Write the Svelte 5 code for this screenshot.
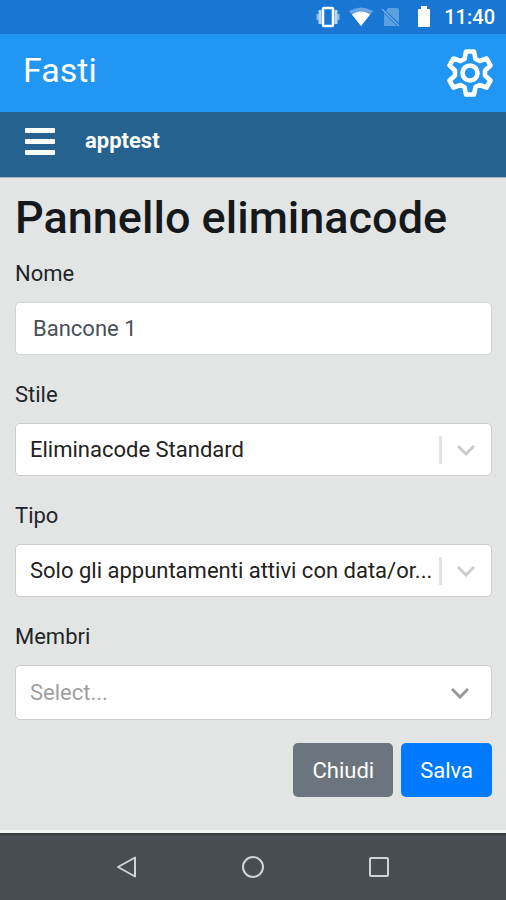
<script>
  let name = $state("Bancone 1");
  let style = $state("standard");
  let type = $state("active");
  let member = $state("");
</script>

<svelte:head>
  <title>Fasti</title>
</svelte:head>

<div class="screen">
  <div class="status">
    <svg width="26" height="22" viewBox="0 0 26 22" fill="none" stroke="#fff">
      <rect x="8" y="2" width="10" height="18" rx="1" stroke-width="2.5" />
      <path d="M5 4v14M21 4v14" stroke-width="3" opacity=".7" />
      <path d="M2.5 8v6M23.5 8v6" stroke-width="2" opacity=".5" />
    </svg>
    <svg width="24" height="20" viewBox="0 0 24 20" fill="#fff">
      <path d="M0 4Q12-3 24 4L12 19z" opacity=".35" />
      <path d="M3 7.5Q12 1.5 21 7.5L12 19z" />
    </svg>
    <svg class="sim" width="20" height="20" viewBox="0 0 20 20">
      <path d="M7 1h9q2 0 2 2v13L5 4zM3 6l13 13H3z" fill="#fff" opacity=".3" />
      <path d="M1 2l17 17" stroke="#fff" stroke-width="1.5" opacity=".4" />
    </svg>
    <svg class="battery" width="14" height="22" viewBox="0 0 14 22" fill="#fff">
      <path d="M4 0h6v3h2q1 0 1 1v16q0 1-1 1H2q-1 0-1-1V4q0-1 1-1h2z" />
    </svg>
    <span>11:40</span>
  </div>

  <header class="appbar">
    <span class="brand">Fasti</span>
    <button class="icon" aria-label="Impostazioni">
      <svg width="48" height="50" viewBox="-24 -25 48 50" fill="none" stroke="#fff" stroke-width="4.6" stroke-linejoin="round">
        <path d="M-4-21.500H4L5.500-14L9.500-12L16.500-14.500L20.500-7.500L15-2.500V2.500L20.500 7.500L16.500 14.500L9.500 12L5.500 14L4 21.500H-4L-5.500 14L-9.500 12L-16.500 14.500L-20.500 7.500L-15 2.500V-2.500L-20.500-7.500L-16.500-14.500L-9.500-12L-5.500-14Z" />
        <circle r="7.500" />
      </svg>
    </button>
  </header>

  <nav class="menubar">
    <button class="icon" aria-label="Menu">
      <svg width="30" height="28" viewBox="0 0 30 28" fill="#fff">
        <rect width="30" height="5" rx="1" y="1" />
        <rect width="30" height="5" rx="1" y="12" />
        <rect width="30" height="5" rx="1" y="23" />
      </svg>
    </button>
    <strong>apptest</strong>
  </nav>

  <main>
    <h1>Pannello eliminacode</h1>
    <form onsubmit={(e) => e.preventDefault()}>
      <div class="group">
        <label for="name">Nome</label>
        <input id="name" type="text" bind:value={name} />
      </div>

      <div class="group">
        <label for="style">Stile</label>
        <div class="select">
          <select id="style" bind:value={style}>
            <option value="standard">Eliminacode Standard</option>
          </select>
          {@render chevron(true)}
        </div>
      </div>

      <div class="group">
        <label for="type">Tipo</label>
        <div class="select">
          <select id="type" bind:value={type}>
            <option value="active">Solo gli appuntamenti attivi con data/or...</option>
          </select>
          {@render chevron(true)}
        </div>
      </div>

      <div class="group">
        <label for="members">Membri</label>
        <div class="select members">
          <select id="members" class:empty={!member} bind:value={member}>
            <option value="">Select...</option>
          </select>
          {@render chevron(false)}
        </div>
      </div>

      <div class="actions">
        <button type="button" class="btn secondary">Chiudi</button>
        <button type="submit" class="btn primary">Salva</button>
      </div>
    </form>
  </main>

  <footer>
    <button class="icon" aria-label="Indietro">
      <svg width="24" height="24" viewBox="0 0 24 24"><path d="M20 2.500v19L3 12z" /></svg>
    </button>
    <button class="icon" aria-label="Home">
      <svg width="24" height="24" viewBox="0 0 24 24"><circle cx="12" cy="12" r="10" /></svg>
    </button>
    <button class="icon" aria-label="Recenti">
      <svg width="24" height="24" viewBox="0 0 24 24"><rect x="3" y="3" width="18" height="18" rx="1" /></svg>
    </button>
  </footer>
</div>

{#snippet chevron(separator)}
  <span class="indicator" class:separator>
    <svg width="18" height="12" viewBox="0 0 18 12" fill="none" stroke="currentColor" stroke-width="3">
      <path d="M1 2l8 8 8-8" />
    </svg>
  </span>
{/snippet}

<style>
  :global(body) {
    margin: 0;
    background: #e3e5e4;
  }

  .screen {
    display: flex;
    flex-direction: column;
    min-height: 100vh;
    font-family: Roboto, sans-serif;
    font-size: 22px;
    line-height: 33px;
    color: #212529;
  }

  svg {
    display: block;
  }

  button,
  input,
  select {
    box-sizing: border-box;
    font: inherit;
  }

  .icon {
    padding: 0;
    border: 0;
    background: none;
    cursor: pointer;
  }

  .status {
    display: flex;
    align-items: center;
    justify-content: flex-end;
    gap: 8px;
    height: 34px;
    padding: 0 11px;
    background: #1976d2;
    color: #fff;
    font-size: 20px;
    font-weight: 500;
  }

  .sim {
    margin-right: 8px;
  }

  .battery {
    margin-right: 5px;
  }

  .appbar {
    display: flex;
    align-items: center;
    justify-content: space-between;
    height: 78px;
    padding: 0 12px 0 23px;
    background: #2196f3;
    color: #fff;
  }

  .brand {
    padding-bottom: 6px;
    font-size: 34px;
  }

  .menubar {
    display: flex;
    align-items: center;
    gap: 30px;
    height: 66px;
    padding: 0 25px 8px;
    box-sizing: border-box;
    border-bottom: 1px solid #a5b5c0;
    background: #25628f;
    color: #fff;
  }

  main {
    flex: 1;
    padding: 13px 14px 12px 15px;
    border-bottom: 3px solid #f2f7f6;
  }

  h1 {
    margin: 0 0 13px;
    color: #15191c;
    font-size: 45px;
    font-weight: 500;
    line-height: 53px;
  }

  .group {
    margin-bottom: 23px;
  }

  label {
    display: block;
    margin-bottom: 12px;
  }

  input,
  .select {
    width: 100%;
    height: 53px;
    border: 1px solid #ced4da;
    border-radius: 5px;
    background: #fff;
  }

  input {
    padding: 0 17px;
    color: #495057;
  }

  .select {
    display: flex;
    align-items: center;
    box-sizing: border-box;
    border-color: #ccc;
  }

  .members {
    height: 55px;
  }

  select {
    flex: 1;
    min-width: 0;
    height: 100%;
    padding: 0 0 0 14px;
    border: 0;
    appearance: none;
    background: none;
    color: #222;
  }

  .empty {
    color: #a0a0a0;
  }

  .indicator {
    display: flex;
    align-items: center;
    justify-content: center;
    width: 52px;
    height: 28px;
    padding-right: 10px;
    box-sizing: border-box;
    color: #999;
    pointer-events: none;
  }

  .separator {
    padding-right: 2px;
    border-left: 3px solid #e2e2e2;
    color: #ccc;
  }

  .actions {
    display: flex;
    justify-content: flex-end;
    gap: 8px;
  }

  .btn {
    height: 54px;
    padding: 0 19px;
    border: 0;
    border-radius: 5px;
    color: #fff;
    cursor: pointer;
  }

  .secondary {
    background: #6c757d;
  }

  .primary {
    background: #007bff;
  }

  footer {
    display: flex;
    align-items: center;
    justify-content: center;
    gap: 102px;
    height: 67px;
    padding-bottom: 1px;
    box-sizing: border-box;
    border-top: 2px solid #353d41;
    background: #464e53;
  }

  footer svg {
    fill: none;
    stroke: #d0d4d5;
    stroke-width: 2;
    stroke-linejoin: round;
  }
</style>
